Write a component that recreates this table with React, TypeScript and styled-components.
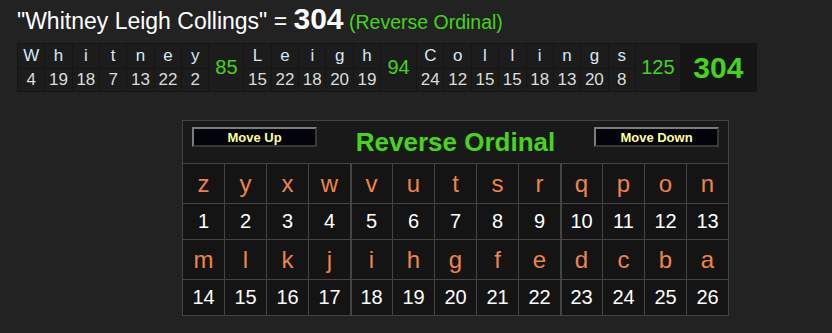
import React from "react";
import styled, { createGlobalStyle } from "styled-components";

const Global = createGlobalStyle`
  html, body { margin: 0; padding: 0; background: #222222; }
  body { font-family: "Liberation Sans", Arial, sans-serif; color: #eeeeee; width: 832px; height: 333px; overflow: hidden; }
`;

const Page = styled.div`
  display: flex;
  flex-direction: column;
  align-items: flex-start;
`;

const Heading = styled.div`
  display: flex;
  align-items: baseline;
  height: 43px;
  box-sizing: border-box;
  padding: 4px 0 0 17px;
  line-height: 1;
  white-space: pre;
`;

const Phrase = styled.span`
  font-size: 23px;
  color: #ffffff;
`;

const Total = styled.span`
  font-size: 30px;
  font-weight: bold;
  color: #ffffff;
`;

const CipherName = styled.span`
  font-size: 19.5px;
  color: #44d41c;
`;

const Breakdown = styled.table`
  margin-left: 17px;
  border-spacing: 1px;
  background: #151515;
  table-layout: fixed;
  font-family: "Liberation Sans", Arial, sans-serif;
`;

const LetterCell = styled.td<{ $num?: boolean }>`
  width: 26.35px;
  height: ${(p) => (p.$num ? "22px" : "24px")};
  padding: 0;
  text-align: center;
  background: #1c1c1c;
  font-size: 17px;
  color: ${(p) => (p.$num ? "#dcdcdc" : "#d8e6f6")};
`;

const SumCell = styled.td<{ $w: number }>`
  width: ${(p) => p.$w}px;
  padding: 0;
  text-align: center;
  background: #1c1c1c;
  font-size: 20px;
  color: #44d41c;
`;

const GrandCell = styled.td`
  width: 75px;
  padding: 0;
  text-align: center;
  background: #151515;
  font-size: 30px;
  font-weight: bold;
  color: #44d41c;
`;

const Cipher = styled.div`
  margin: 28px 0 0 182px;
  border: 1px solid #444444;
  background: #444444;
  display: flex;
  flex-direction: column;
  gap: 1px;
`;

const CipherHeader = styled.div`
  height: 42px;
  box-sizing: border-box;
  padding: 6px 9px 0;
  background: #191919;
  display: flex;
  justify-content: space-between;
  align-items: flex-start;
`;

const MoveButton = styled.button`
  width: 125px;
  height: 20px;
  box-sizing: border-box;
  padding: 1px 0 0;
  margin: 0;
  background: #03030c;
  border: 2px solid;
  border-color: #7c7c7c #383838 #383838 #7c7c7c;
  font-family: "Liberation Sans", Arial, sans-serif;
  font-size: 13px;
  font-weight: bold;
  line-height: 14px;
  color: #ffff99;
  cursor: pointer;
`;

const CipherTitle = styled.div`
  font-size: 26px;
  font-weight: bold;
  line-height: 30px;
  color: #46d41c;
`;

const Grid = styled.div`
  display: grid;
  grid-template-columns: repeat(13, 41px);
  grid-template-rows: 39px 35px 39px 35px;
  gap: 1px;
`;

const GridCell = styled.div<{ $letter?: boolean; $sep?: boolean }>`
  display: flex;
  align-items: center;
  justify-content: center;
  background: #141414;
  font-size: ${(p) => (p.$letter ? "24px" : "20px")};
  color: ${(p) => (p.$letter ? "#ee8448" : "#ffffff")};
  box-shadow: ${(p) => (p.$sep ? "inset 1px 0 0 #444444" : "none")};
`;

const words = [
  { text: "Whitney", sum: 85, w: 34 },
  { text: "Leigh", sum: 94, w: 35 },
  { text: "Collings", sum: 125, w: 44 },
];

const rev = (ch: string) => 27 - (ch.toLowerCase().charCodeAt(0) - 96);

const alphabet = "zyxwvutsrqponmlkjihgfedcba".split("");

export default function App() {
  const topRow: React.ReactNode[] = [];
  const bottomRow: React.ReactNode[] = [];
  words.forEach((word, wi) => {
    word.text.split("").forEach((ch, ci) => {
      topRow.push(<LetterCell key={`l${wi}-${ci}`}>{ch}</LetterCell>);
      bottomRow.push(
        <LetterCell key={`n${wi}-${ci}`} $num>
          {rev(ch)}
        </LetterCell>
      );
    });
    topRow.push(
      <SumCell key={`s${wi}`} rowSpan={2} $w={word.w}>
        {word.sum}
      </SumCell>
    );
  });
  topRow.push(
    <GrandCell key="grand" rowSpan={2}>
      304
    </GrandCell>
  );

  const halves = [alphabet.slice(0, 13), alphabet.slice(13)];

  return (
    <Page>
      <Global />
      <Heading>
        <Phrase>{'"Whitney Leigh Collings" = '}</Phrase>
        <Total>304</Total>
        <CipherName> (Reverse Ordinal)</CipherName>
      </Heading>
      <Breakdown>
        <tbody>
          <tr>{topRow}</tr>
          <tr>{bottomRow}</tr>
        </tbody>
      </Breakdown>
      <Cipher>
        <CipherHeader>
          <MoveButton>Move Up</MoveButton>
          <CipherTitle>Reverse Ordinal</CipherTitle>
          <MoveButton>Move Down</MoveButton>
        </CipherHeader>
        <Grid>
          {halves.map((half, hi) => (
            <React.Fragment key={hi}>
              {half.map((ch, i) => (
                <GridCell key={`c${hi}-${i}`} $letter $sep={i === 4 || i === 9}>
                  {ch}
                </GridCell>
              ))}
              {half.map((ch, i) => (
                <GridCell key={`v${hi}-${i}`} $sep={i === 4 || i === 9}>
                  {rev(ch)}
                </GridCell>
              ))}
            </React.Fragment>
          ))}
        </Grid>
      </Cipher>
    </Page>
  );
}
